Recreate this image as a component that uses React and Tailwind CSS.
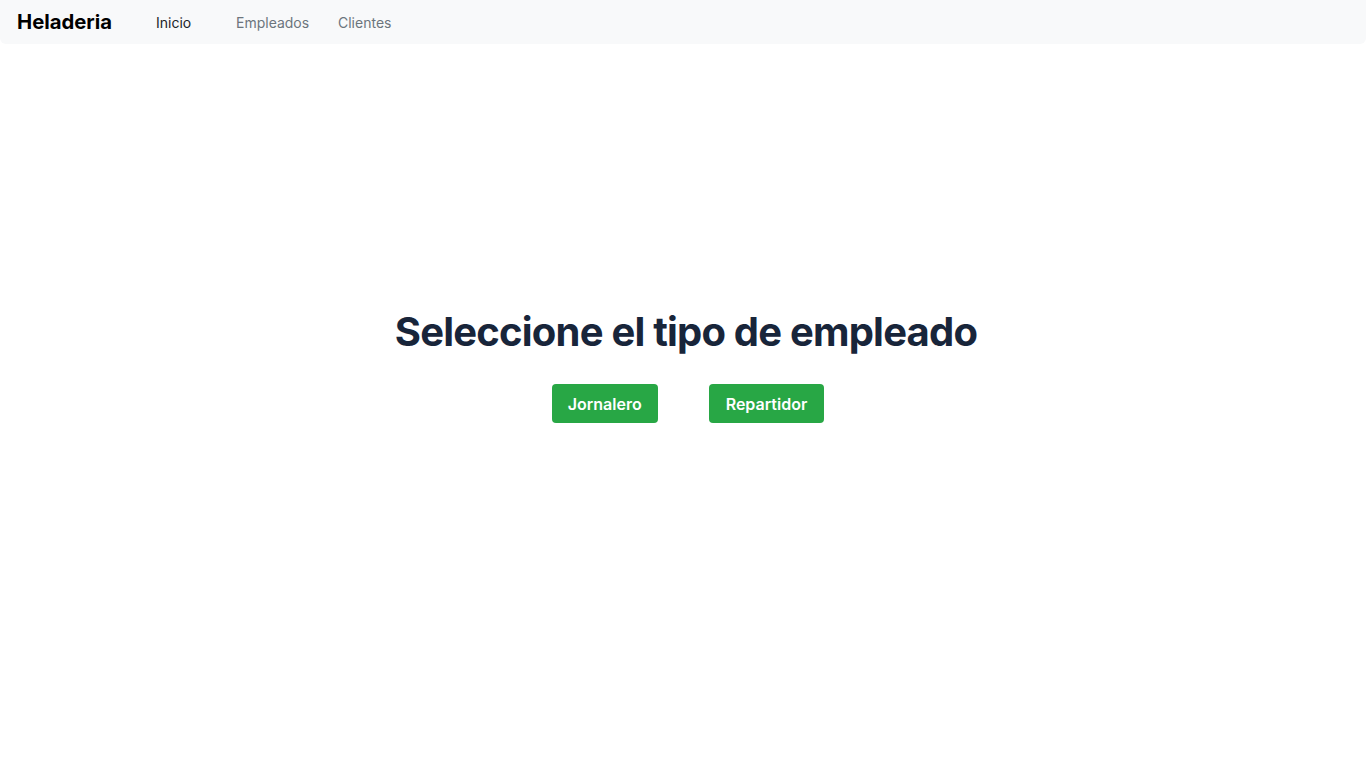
export default function App() {
  return (
    <div className="min-h-screen bg-white" style={{ fontFamily: 'Inter, "Noto Sans", sans-serif' }}>
      <nav className="flex items-center h-[44px] bg-[#f8f9fa] rounded-b-md pl-[17px] pt-[1px]">
        <span className="text-[20.3px] font-bold text-black w-[139px]">Heladeria</span>
        <ul className="flex items-center text-[14px]">
          <li className="w-[80px]"><a href="#" className="text-[#212529]">Inicio</a></li>
          <li className="w-[102px]"><a href="#" className="text-[#6c757d]">Empleados</a></li>
          <li><a href="#" className="text-[#6c757d]">Clientes</a></li>
        </ul>
      </nav>
      <main className="flex flex-col items-center pt-[264px]">
        <h1 className="text-[40px] font-bold text-[#18253a] tracking-[-0.8px] leading-[48px] pl-[6px]">
          Seleccione el tipo de empleado
        </h1>
        <div className="flex gap-[51px] mt-[28px] pl-[10px]">
          <button className="h-[39px] px-4 bg-[#28a745] text-white font-semibold text-[16px] rounded-[4px]">Jornalero</button>
          <button className="h-[39px] px-[17px] bg-[#28a745] text-white font-semibold text-[16px] rounded-[4px]">Repartidor</button>
        </div>
      </main>
    </div>
  );
}
